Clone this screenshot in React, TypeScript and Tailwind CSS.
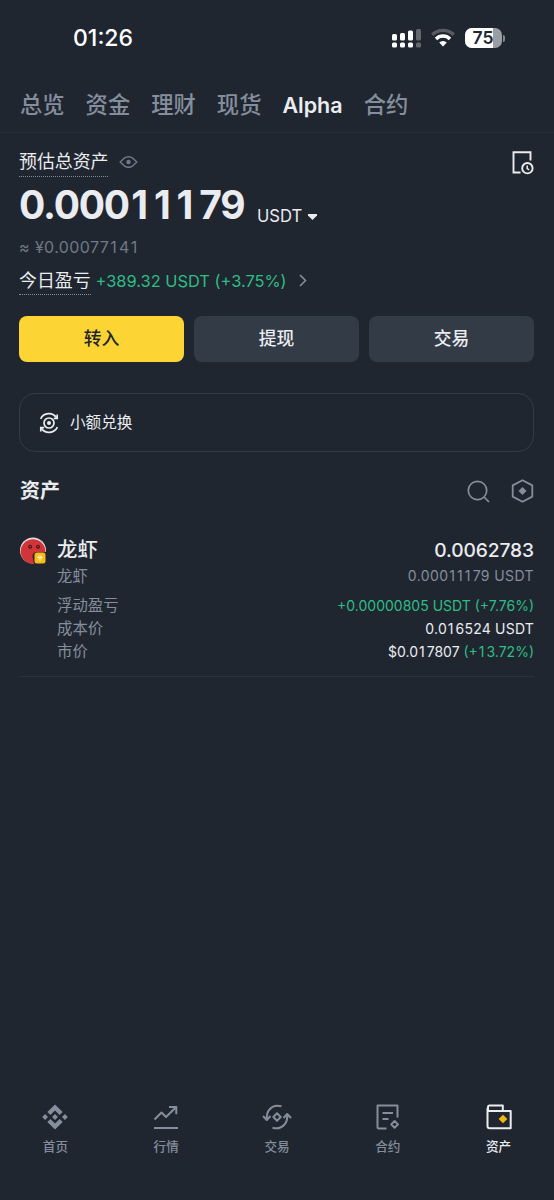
import React from 'react';

const UP = 'text-[#2ebd85]';

const tabs = ['总览', '资金', '理财', '现货', 'Alpha', '合约'];

// Inter's "1" is narrow, so runs of it get extra room to line up with other digits
const Num = ({ value }: { value: string }) => (
  <>
    {value.split(/(1+)/).map((part, i) =>
      part.startsWith('1') ? (
        <span key={i} className="pl-[0.06em] tracking-[0.15em]">
          {part}
        </span>
      ) : (
        part
      )
    )}
  </>
);

const StatusBar = () => (
  <div className="flex h-[76px] items-center justify-between pl-[73px] pr-[49px]">
    <span className="font-[Inter] text-[23px] font-medium leading-none text-white">01:26</span>
    <div className="flex items-center gap-[10px]">
      <svg width="29" height="20" viewBox="0 0 29 20" fill="#fff">
        <rect x="0" y="6" width="5" height="6.5" rx="1.5" />
        <rect x="8" y="5" width="5" height="7.5" rx="1.5" />
        <rect x="16" y="2.5" width="5" height="10" rx="1.5" />
        <rect x="24" y="1" width="5" height="11.5" rx="1.5" opacity="0.3" />
        <rect x="0" y="14.5" width="5" height="5" rx="1.5" />
        <rect x="8" y="14.5" width="5" height="5" rx="1.5" />
        <rect x="16" y="14.5" width="5" height="5" rx="1.5" />
        <rect x="24" y="14.5" width="5" height="5" rx="1.5" opacity="0.3" />
      </svg>
      <svg width="24" height="20" viewBox="0 0 24 20" fill="none" stroke="#fff" strokeWidth="3.4">
        <path d="M1.2 6.8 A15.5 15.5 0 0 1 22.8 6.8" opacity="0.25" />
        <path d="M5 11 A9.8 9.8 0 0 1 19 11" />
        <path d="M8.2 14.6 A5.4 5.4 0 0 1 15.8 14.6 L12 18.6 Z" fill="#fff" stroke="none" />
      </svg>
      <div className="flex items-center gap-px">
        <div className="relative flex h-[20px] w-[37px] items-center justify-center overflow-hidden rounded-[7px] bg-[#9a9da2]">
          <div className="absolute inset-y-0 left-0 w-[28px] bg-white" />
          <span className="relative font-[Inter] text-[17.5px] font-semibold leading-none text-[#20262f]">75</span>
        </div>
        <div className="h-[7px] w-[2.5px] rounded-r-full bg-[#85898f]" />
      </div>
    </div>
  </div>
);

const Tabs = () => (
  <div className="flex h-[57px] items-center gap-[21px] border-b border-[#272d36] pl-5 pt-[2px] text-[22.3px] font-medium text-[#848e9c]">
    {tabs.map((tab) => (
      <span key={tab} className={tab === 'Alpha' ? 'font-[Inter] text-[21.5px] font-semibold text-[#eaecef]' : ''}>
        {tab}
      </span>
    ))}
  </div>
);

const Overview = () => (
  <section className="pl-[19px] pr-5">
    <div className="flex h-[43px] items-start justify-between pt-[14px]">
      <div className="flex items-start gap-[11px]">
        <span className="h-[30px] border-b border-dotted border-[#848e9c] text-[17.9px] leading-[30px]">预估总资产</span>
        <svg className="mt-2" width="19" height="14" viewBox="0 0 19 14" fill="none" stroke="#707987" strokeWidth="1.5" strokeLinejoin="round">
          <path d="M1.2 7 L5.2 3.2 Q9.5 0.2 13.8 3.2 L17.8 7 L13.8 10.8 Q9.5 13.8 5.2 10.8 Z" />
          <circle cx="9.5" cy="7" r="2.2" fill="#707987" stroke="none" />
        </svg>
      </div>
      <svg className="mt-1" width="22" height="24" viewBox="0 0 22 24" fill="none" stroke="#eaecef" strokeWidth="1.9">
        <path d="M8.5 21.5 H1.5 V1.2 H18.5 V9.5" />
        <circle cx="15.4" cy="17.2" r="5.2" />
        <path d="M15.2 14.4 V17.6 L17.2 18.8" strokeWidth="1.5" />
      </svg>
    </div>
    <div className="flex h-[56px] items-end font-[Inter]">
      <span className="w-[226px] whitespace-nowrap text-[39px] font-bold leading-[54px] tracking-[-1.2px]">
        <Num value="0.00011179" />
      </span>
      <span className="ml-3 text-[16.6px] leading-[32px]">USDT</span>
      <svg className="mb-[12px] ml-[6px]" width="9" height="6" viewBox="0 0 9 6" fill="#eaecef">
        <path d="M0 0 H9 V1.5 L4.5 6 L0 1.5 Z" />
      </svg>
    </div>
    <div className="h-[30px] font-[Inter] text-[16px] leading-[31px] tracking-[0.4px] text-[#707987]">
      ≈ <Num value="¥0.00077141" />
    </div>
    <div className="flex h-[34px] items-start">
      <span className="h-[33px] border-b border-dotted border-[#848e9c] text-[17.9px] leading-[37px]">今日盈亏</span>
      <span className={`ml-[5px] font-[Inter] text-[16.4px] leading-[38px] ${UP}`}>+389.32 USDT (+3.75%)</span>
      <svg className="ml-3 mt-3" width="8" height="13" viewBox="0 0 8 13" fill="none" stroke="#848e9c" strokeWidth="1.6">
        <path d="M1 1 L6.5 6.5 L1 12" />
      </svg>
    </div>
    <div className="mt-[20px] grid grid-cols-3 gap-[10px] text-[17.8px] font-medium">
      <button className="h-[46px] rounded-lg bg-[#fcd535] text-[#202630]">转入</button>
      <button className="h-[46px] rounded-lg bg-[#333b47]">提现</button>
      <button className="h-[46px] rounded-lg bg-[#333b47]">交易</button>
    </div>
    <div className="mt-[31px] flex h-[59px] items-center gap-[11px] rounded-2xl border border-[#333b47] pl-[19px] text-[15.6px]">
      <svg className="overflow-visible" width="20" height="20" viewBox="0 0 20 20" fill="none" stroke="#eaecef" strokeWidth="1.7">
        <path d="M1.6 5.8 A9.2 9.2 0 0 1 17.6 4.8" />
        <path d="M18.4 14.2 A9.2 9.2 0 0 1 2.4 15.2" />
        <path d="M18.2 1.6 V5.4 H14.8 M1.8 18.4 V14.6 H5.2" />
        <circle cx="10" cy="10" r="5" />
        <circle cx="10" cy="10" r="2" fill="#eaecef" stroke="none" />
      </svg>
      小额兑换
    </div>
  </section>
);

const TokenIcon = () => (
  <svg width="28" height="28" viewBox="0 0 28 28">
    <circle cx="13" cy="13.5" r="13" fill="#e6dcdc" />
    <circle cx="13" cy="14.5" r="12.3" fill="#d2343a" />
    <circle cx="10.2" cy="9.8" r="2" fill="#4c1518" />
    <circle cx="10.2" cy="9.6" r="0.6" fill="#b98a8c" />
    <circle cx="18" cy="9.8" r="2" fill="#4c1518" />
    <circle cx="18" cy="9.6" r="0.6" fill="#b98a8c" />
    <path d="M12.5 20 Q12 16 16 15 H26 V27 H14 Z" fill="#3a2220" />
    <rect x="14.5" y="15.5" width="11" height="11" rx="2.5" fill="#f3bd1c" />
    <path d="M20 17.5 V24.5 M17 20.5 H23 M18 18.8 L22 22.4 M22 18.8 L18 22.4" stroke="#ffe9a0" strokeWidth="1" />
  </svg>
);

const Assets = () => (
  <section className="px-5">
    <div className="flex h-[78px] items-center justify-between">
      <h2 className="text-[20px] font-bold">资产</h2>
      <div className="flex items-center gap-[21px]">
        <svg width="23" height="23" viewBox="0 0 23 23" fill="none" stroke="#848e9c" strokeWidth="1.7">
          <circle cx="10.5" cy="10.5" r="9.2" />
          <path d="M17 17 L22 22" />
        </svg>
        <svg width="23" height="24" viewBox="0 0 23 24" fill="none" stroke="#848e9c" strokeWidth="1.8" strokeLinejoin="round">
          <path d="M11.5 1.2 L21.3 6.4 V17.6 L11.5 22.8 L1.7 17.6 V6.4 Z" />
          <path d="M11.5 8 L15.5 12 L11.5 16 L7.5 12 Z" fill="#848e9c" stroke="none" />
        </svg>
      </div>
    </div>
    <div className="flex gap-[9px] border-b border-[#2b323c] pb-[13px] pt-[7px]">
      <TokenIcon />
      <div className="flex-1">
        <div className="flex h-[27px] items-center justify-between">
          <span className="text-[20.4px] font-medium">龙虾</span>
          <span className="font-[Inter] text-[19.2px] font-medium tracking-[-0.1px]">0.0062783</span>
        </div>
        <div className="flex h-[26px] items-center justify-between text-[15.4px] text-[#848e9c]">
          <span>龙虾</span>
          <span className="pb-[3px] font-[Inter] text-[14px] tracking-[0.4px]">
            <Num value="0.00011179" /> USDT
          </span>
        </div>
        <div className="mt-1 text-[15.4px] text-[#848e9c]">
          <div className="flex h-[23px] items-center justify-between">
            <span>浮动盈亏</span>
            <span className={`font-[Inter] text-[14px] ${UP}`}>+0.00000805 USDT (+7.76%)</span>
          </div>
          <div className="flex h-[23px] items-center justify-between">
            <span>成本价</span>
            <span className="font-[Inter] text-[14px] tracking-[0.2px] text-[#eaecef]">
              <Num value="0.016524" /> USDT
            </span>
          </div>
          <div className="flex h-[23px] items-center justify-between">
            <span>市价</span>
            <span className="font-[Inter] text-[14px] text-[#eaecef]">
              <Num value="$0.017807" />{' '}
              <span className={UP}>
                <Num value="(+13.72%)" />
              </span>
            </span>
          </div>
        </div>
      </div>
    </div>
  </section>
);

const navItems = [
  {
    label: '首页',
    icon: (
      <g fill="currentColor" stroke="none">
        <path d="M13 0.5 L20.7 8 L17.6 11 L13 6.6 L8.4 11 L5.3 8 Z" />
        <path d="M13 25.5 L20.7 18 L17.6 15 L13 19.4 L8.4 15 L5.3 18 Z" />
        <path d="M13 10.1 L15.9 13 L13 15.9 L10.1 13 Z" />
        <path d="M3.1 10.1 L6 13 L3.1 15.9 L0.2 13 Z" />
        <path d="M22.9 10.1 L25.8 13 L22.9 15.9 L20 13 Z" />
      </g>
    ),
  },
  {
    label: '行情',
    icon: (
      <g>
        <path d="M1.5 15.5 L8.5 8.5 L13 13 L23 3.2" />
        <path d="M16 3 H23.3 V10.3" />
        <path d="M1 24 H25" />
      </g>
    ),
  },
  {
    label: '交易',
    icon: (
      <g>
        <path d="M17.5 2.3 Q10 0.2 5.5 5.5 Q2.3 9 2.8 15.5" />
        <path d="M-1 12 L2.8 16 L6.5 12" />
        <path d="M8.5 23.7 Q16 25.8 20.5 20.5 Q23.7 17 23.2 10.5" />
        <path d="M19.5 14 L23.2 10 L27 14" />
        <path d="M13 9.3 L16.7 13 L13 16.7 L9.3 13 Z" />
      </g>
    ),
  },
  {
    label: '合约',
    icon: (
      <g>
        <path d="M11.5 24.5 H4 Q2.5 24.5 2.5 23 V1.5 H22.5 V13.5" />
        <path d="M7.5 9 H18 M7.5 15 H13.5" />
        <path d="M19.6 17 L23 20.4 L19.6 23.8 L16.2 20.4 Z" />
      </g>
    ),
  },
  {
    label: '资产',
    active: true,
    icon: (
      <g>
        <path d="M2 6 V3 Q2 1.5 3.5 1.5 H16.8 V6.5" />
        <path d="M1.5 4 V22 Q1.5 24.3 3.8 24.3 H24.7 V7 H4 Q1.5 7 1.5 4.5" />
        <path d="M17 10.7 L21.3 15 L17 19.3 L12.7 15 Z" fill="#f0b90b" stroke="none" />
      </g>
    ),
  },
];

const BottomNav = () => (
  <nav className="mt-auto grid h-[110px] grid-cols-5 pt-[14px]">
    {navItems.map((item) => (
      <div key={item.label} className={`flex flex-col items-center gap-1 ${item.active ? 'text-[#eaecef]' : 'text-[#848e9c]'}`}>
        <svg className="overflow-visible" width="26" height="26" viewBox="0 0 26 26" fill="none" stroke="currentColor" strokeWidth="2" strokeLinejoin="round">
          {item.icon}
        </svg>
        <span className="text-[12.6px] font-medium leading-[26px]">{item.label}</span>
      </div>
    ))}
  </nav>
);

const App: React.FC = () => (
  <div className="flex h-[1200px] w-[554px] flex-col bg-[#202630] font-['Inter','Noto_Sans_CJK_SC',sans-serif] text-[#eaecef]">
    <StatusBar />
    <Tabs />
    <Overview />
    <Assets />
    <BottomNav />
  </div>
);

export default App;
